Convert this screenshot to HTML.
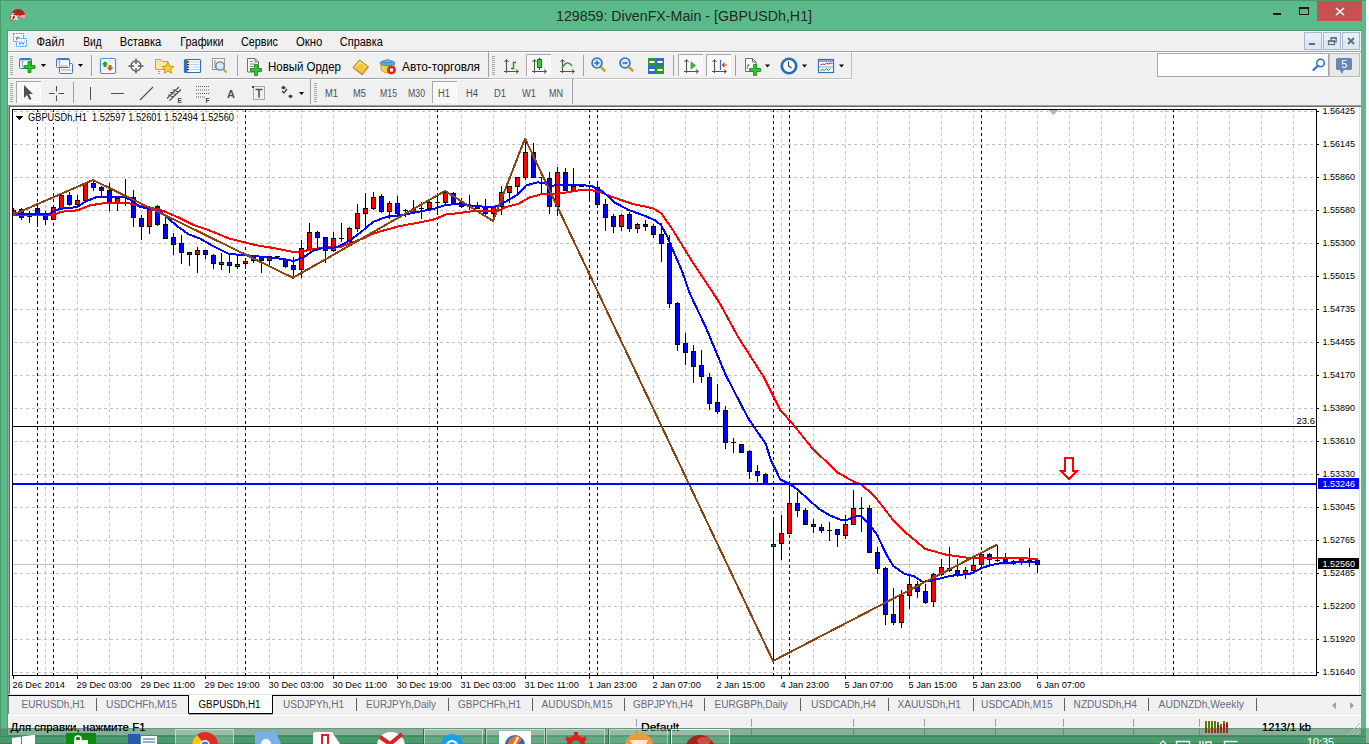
<!DOCTYPE html><html><head><meta charset="utf-8"><style>html,body{margin:0;padding:0;width:1369px;height:744px;overflow:hidden;background:#fff}svg{display:block}text{font-family:"Liberation Sans",sans-serif}</style></head><body>
<svg width="1369" height="744" viewBox="0 0 1369 744">
<rect x="0" y="0" width="1369" height="744" fill="#ffffff" />
<rect x="0" y="0" width="1366" height="744" fill="#5cba8a" />
<rect x="0" y="0" width="1366" height="1" fill="#4a9a70" />
<rect x="0" y="0" width="1" height="744" fill="#4a9a70" />
<path d="M10.5 20.5 C10 14 13 9 18 9 C22 9 25 12 25.8 16.5 C25.7 18.5 24.8 19.2 23 18.2 C20.5 16.8 17 17 15 18.5 C13.5 19.8 12 21 10.5 20.5Z" fill="#b3241a"/>
<path d="M17.5 17.2 C20.5 15.2 23.5 14.5 25.8 15 C26 18 25.2 19.4 23.2 18.5 C21.5 17.5 19.5 17 17.5 17.2Z" fill="#eda59c"/>
<text x="10.5" y="19.5" font-size="9" fill="#fff" text-anchor="start" font-style="italic" font-weight="bold">fx</text>
<text x="556" y="21" font-size="14" fill="#1f2a24" text-anchor="start" textLength="256" lengthAdjust="spacingAndGlyphs" >129859: DivenFX-Main - [GBPUSDh,H1]</text>
<rect x="1273" y="13" width="8" height="2" fill="#1a1a1a" />
<rect x="1299.5" y="7.5" width="9" height="7" fill="none" stroke="#1a1a1a" stroke-width="1"/>
<rect x="1299" y="7" width="10" height="2" fill="#1a1a1a" />
<rect x="1317" y="1" width="45" height="20" fill="#c75050" />
<path d="M1336 8L1344 15M1344 8L1336 15" stroke="#fff" stroke-width="1.6"/>
<rect x="7" y="30" width="1355" height="706" fill="#4f9e76" />
<rect x="8" y="31" width="1353" height="704" fill="#f0f0f0" />
<rect x="8" y="31" width="1353" height="1" fill="#fbf8f8" />
<rect x="8" y="31" width="1" height="697" fill="#fbf8f8" />
<g>
<rect x="13.5" y="33.5" width="10" height="8" fill="#fff" stroke="#3a8cf0" stroke-width="1" stroke-dasharray="1.5,0.8"/>
<rect x="16.5" y="38.5" width="10" height="8" fill="#fff" stroke="#3a8cf0" stroke-width="1" stroke-dasharray="1.5,0.8"/>
<path d="M15.5 37.5h3M17.5 36l1.5 1.5-1.5 1.5" stroke="#3a8cf0" fill="none" stroke-width="0.9"/>
<path d="M18.5 41.5l1.5 3 1.5-3 1.5 3 1.5-3" stroke="#3a8cf0" fill="none" stroke-width="0.9"/>
<text x="36.5" y="45.5" font-size="12" fill="#000" text-anchor="start" textLength="27.8" lengthAdjust="spacingAndGlyphs" >Файл</text>
<text x="83.3" y="45.5" font-size="12" fill="#000" text-anchor="start" textLength="18.4" lengthAdjust="spacingAndGlyphs" >Вид</text>
<text x="119.8" y="45.5" font-size="12" fill="#000" text-anchor="start" textLength="41.5" lengthAdjust="spacingAndGlyphs" >Вставка</text>
<text x="180.3" y="45.5" font-size="12" fill="#000" text-anchor="start" textLength="43.2" lengthAdjust="spacingAndGlyphs" >Графики</text>
<text x="241" y="45.5" font-size="12" fill="#000" text-anchor="start" textLength="37" lengthAdjust="spacingAndGlyphs" >Сервис</text>
<text x="296" y="45.5" font-size="12" fill="#000" text-anchor="start" textLength="26.3" lengthAdjust="spacingAndGlyphs" >Окно</text>
<text x="339.8" y="45.5" font-size="12" fill="#000" text-anchor="start" textLength="43" lengthAdjust="spacingAndGlyphs" >Справка</text>
</g>
<rect x="1304.5" y="32.5" width="17" height="17" fill="#dce8f5" stroke="#a9b8cb" stroke-width="1"/>
<rect x="1305" y="33" width="16" height="7" fill="#e6eff9" />
<rect x="1323.5" y="32.5" width="17" height="17" fill="#dce8f5" stroke="#a9b8cb" stroke-width="1"/>
<rect x="1324" y="33" width="16" height="7" fill="#e6eff9" />
<rect x="1342.5" y="32.5" width="17" height="17" fill="#dce8f5" stroke="#a9b8cb" stroke-width="1"/>
<rect x="1343" y="33" width="16" height="7" fill="#e6eff9" />
<rect x="1309" y="43" width="6" height="2" fill="#5f6b78" />
<rect x="1328.5" y="41" width="6" height="3.5" fill="none" stroke="#5f6b78" stroke-width="1.2"/><rect x="1328" y="40.4" width="7" height="1.4" fill="#5f6b78"/><path d="M1331 40.2V37.8H1336.2V41.8H1335" fill="none" stroke="#5f6b78" stroke-width="1.2"/><rect x="1330.5" y="37.2" width="6.2" height="1.4" fill="#5f6b78"/>
<path d="M1348 38L1354 44M1354 38L1348 44" stroke="#5f6b78" stroke-width="1.8"/>
<rect x="8" y="51" width="1353" height="1" fill="#a0a0a0" />
<rect x="8" y="52" width="1353" height="1" fill="#ffffff" />
<rect x="8" y="78" width="843" height="1" fill="#a0a0a0" />
<rect x="8" y="79" width="843" height="1" fill="#ffffff" />
<rect x="488" y="52" width="1" height="25" fill="#a0a0a0" />
<path d="M851.5 52V78.5H489" stroke="#c0c0c0" fill="none"/>
<rect x="310" y="79" width="1" height="25" fill="#a0a0a0" />
<rect x="572" y="79" width="1" height="25" fill="#a0a0a0" />
<rect x="10" y="56" width="3" height="1" fill="#a8a8a8" />
<rect x="10" y="58" width="3" height="1" fill="#a8a8a8" />
<rect x="10" y="60" width="3" height="1" fill="#a8a8a8" />
<rect x="10" y="62" width="3" height="1" fill="#a8a8a8" />
<rect x="10" y="64" width="3" height="1" fill="#a8a8a8" />
<rect x="10" y="66" width="3" height="1" fill="#a8a8a8" />
<rect x="10" y="68" width="3" height="1" fill="#a8a8a8" />
<rect x="10" y="70" width="3" height="1" fill="#a8a8a8" />
<rect x="10" y="72" width="3" height="1" fill="#a8a8a8" />
<rect x="10" y="74" width="3" height="1" fill="#a8a8a8" />
<rect x="10" y="83" width="3" height="1" fill="#a8a8a8" />
<rect x="10" y="85" width="3" height="1" fill="#a8a8a8" />
<rect x="10" y="87" width="3" height="1" fill="#a8a8a8" />
<rect x="10" y="89" width="3" height="1" fill="#a8a8a8" />
<rect x="10" y="91" width="3" height="1" fill="#a8a8a8" />
<rect x="10" y="93" width="3" height="1" fill="#a8a8a8" />
<rect x="10" y="95" width="3" height="1" fill="#a8a8a8" />
<rect x="10" y="97" width="3" height="1" fill="#a8a8a8" />
<rect x="10" y="99" width="3" height="1" fill="#a8a8a8" />
<rect x="10" y="101" width="3" height="1" fill="#a8a8a8" />
<rect x="492" y="56" width="3" height="1" fill="#a8a8a8" />
<rect x="492" y="58" width="3" height="1" fill="#a8a8a8" />
<rect x="492" y="60" width="3" height="1" fill="#a8a8a8" />
<rect x="492" y="62" width="3" height="1" fill="#a8a8a8" />
<rect x="492" y="64" width="3" height="1" fill="#a8a8a8" />
<rect x="492" y="66" width="3" height="1" fill="#a8a8a8" />
<rect x="492" y="68" width="3" height="1" fill="#a8a8a8" />
<rect x="492" y="70" width="3" height="1" fill="#a8a8a8" />
<rect x="492" y="72" width="3" height="1" fill="#a8a8a8" />
<rect x="492" y="74" width="3" height="1" fill="#a8a8a8" />
<rect x="314" y="83" width="3" height="1" fill="#a8a8a8" />
<rect x="314" y="85" width="3" height="1" fill="#a8a8a8" />
<rect x="314" y="87" width="3" height="1" fill="#a8a8a8" />
<rect x="314" y="89" width="3" height="1" fill="#a8a8a8" />
<rect x="314" y="91" width="3" height="1" fill="#a8a8a8" />
<rect x="314" y="93" width="3" height="1" fill="#a8a8a8" />
<rect x="314" y="95" width="3" height="1" fill="#a8a8a8" />
<rect x="314" y="97" width="3" height="1" fill="#a8a8a8" />
<rect x="314" y="99" width="3" height="1" fill="#a8a8a8" />
<rect x="314" y="101" width="3" height="1" fill="#a8a8a8" />
<rect x="91" y="55" width="1" height="21" fill="#a0a0a0" />
<rect x="237" y="55" width="1" height="21" fill="#a0a0a0" />
<rect x="583" y="55" width="1" height="21" fill="#a0a0a0" />
<rect x="673" y="55" width="1" height="21" fill="#a0a0a0" />
<rect x="735" y="55" width="1" height="21" fill="#a0a0a0" />
<rect x="73" y="82" width="1" height="21" fill="#a0a0a0" />
<rect x="1157.5" y="53.5" width="171" height="23" fill="#fff" stroke="#a8a8a8"/>
<circle cx="1320.5" cy="63" r="3.8" fill="#fff" stroke="#2e6ad0" stroke-width="1.5"/><path d="M1317.8 65.8L1313.5 70" stroke="#2e6ad0" stroke-width="2.2" stroke-linecap="round"/>
<rect x="1329.5" y="53.5" width="30" height="23" fill="#e8e8e8" stroke="#bcbcbc"/>
<path d="M1337.5 58H1350.5Q1352 58 1352 59.5V68.5Q1352 70 1350.5 70H1344Q1342.5 71.5 1342.5 74Q1340 72 1340 70H1337.5Q1336 70 1336 68.5V59.5Q1336 58 1337.5 58Z" fill="#6a86b6"/>
<text x="1341.3" y="68.2" font-size="11" fill="#fff" text-anchor="start" textLength="6" lengthAdjust="spacingAndGlyphs" >5</text>
<rect x="16" y="81" width="25" height="22" fill="#f8f8f8"/>
<path d="M16.5 103V81.5H41" stroke="#a8a8a8" fill="none"/><path d="M40.5 82V102.5H17" stroke="#ffffff" fill="none"/>
<rect x="432" y="81" width="25" height="22" fill="#f8f8f8"/>
<path d="M432.5 103V81.5H457" stroke="#a8a8a8" fill="none"/><path d="M456.5 82V102.5H433" stroke="#ffffff" fill="none"/>
<rect x="526" y="54" width="25" height="22" fill="#f8f8f8"/>
<path d="M526.5 76V54.5H551" stroke="#a8a8a8" fill="none"/><path d="M550.5 55V75.5H527" stroke="#ffffff" fill="none"/>
<rect x="678" y="54" width="25" height="22" fill="#f8f8f8"/>
<path d="M678.5 76V54.5H703" stroke="#a8a8a8" fill="none"/><path d="M702.5 55V75.5H679" stroke="#ffffff" fill="none"/>
<rect x="706" y="54" width="25" height="22" fill="#f8f8f8"/>
<path d="M706.5 76V54.5H731" stroke="#a8a8a8" fill="none"/><path d="M730.5 55V75.5H707" stroke="#ffffff" fill="none"/>
<text x="268" y="71" font-size="12" fill="#000" text-anchor="start" textLength="73" lengthAdjust="spacingAndGlyphs" >Новый Ордер</text>
<text x="402" y="71" font-size="12" fill="#000" text-anchor="start" textLength="78" lengthAdjust="spacingAndGlyphs" >Авто-торговля</text>
<text x="325" y="97" font-size="10" fill="#505050" text-anchor="start" textLength="13" lengthAdjust="spacingAndGlyphs" >M1</text>
<text x="353" y="97" font-size="10" fill="#505050" text-anchor="start" textLength="13" lengthAdjust="spacingAndGlyphs" >M5</text>
<text x="380" y="97" font-size="10" fill="#505050" text-anchor="start" textLength="17" lengthAdjust="spacingAndGlyphs" >M15</text>
<text x="408" y="97" font-size="10" fill="#505050" text-anchor="start" textLength="17" lengthAdjust="spacingAndGlyphs" >M30</text>
<text x="438" y="97" font-size="10" fill="#505050" text-anchor="start" textLength="12" lengthAdjust="spacingAndGlyphs" >H1</text>
<text x="466" y="97" font-size="10" fill="#505050" text-anchor="start" textLength="12" lengthAdjust="spacingAndGlyphs" >H4</text>
<text x="494" y="97" font-size="10" fill="#505050" text-anchor="start" textLength="12" lengthAdjust="spacingAndGlyphs" >D1</text>
<text x="522" y="97" font-size="10" fill="#505050" text-anchor="start" textLength="14" lengthAdjust="spacingAndGlyphs" >W1</text>
<text x="549" y="97" font-size="10" fill="#505050" text-anchor="start" textLength="14" lengthAdjust="spacingAndGlyphs" >MN</text>
<rect x="19.5" y="58.5" width="12" height="10" rx="1" fill="#f4f8fc" stroke="#3a7bc8"/><path d="M20 59.5h11" stroke="#3a7bc8" stroke-width="1.5"/><path d="M22.5 61v6M21.5 62l1-1 1 1" stroke="#8aa8c8" fill="none"/>
<path d="M28 61.5h3v4h4v3h-4v4h-3v-4h-4v-3h4z" fill="#22c426" stroke="#0e8a12" stroke-width="0.8"/>
<path d="M41 64h5l-2.5 3z" fill="#000"/>
<rect x="59.5" y="63.5" width="13" height="10" rx="1" fill="#f4f8fc" stroke="#3a7bc8"/><path d="M61 70h10" stroke="#8aa8c8"/>
<rect x="56.5" y="58.5" width="13" height="9" rx="1" fill="#f4f8fc" stroke="#3a7bc8"/><path d="M57 59.5h12" stroke="#3a7bc8" stroke-width="1.2"/><path d="M59.5 61v5h8M58.5 62l1-1 1 1" stroke="#8aa8c8" fill="none"/>
<path d="M78 64h5l-2.5 3z" fill="#000"/>
<rect x="100.5" y="58.5" width="15" height="15" rx="1.5" fill="#fff" stroke="#4a90d9" stroke-width="1.2"/><path d="M108 61h5M108 63h5M101.5 68h5M101.5 70h5" stroke="#dcdcdc"/>
<path d="M105 61l-3.5 3.5h2v2.5h3v-2.5h2z" fill="#20a020"/><path d="M110 71l3.5-3.5h-2v-2.5h-3v2.5h-2z" fill="#e05020"/>
<circle cx="136" cy="66" r="5" fill="none" stroke="#606060" stroke-width="1.3"/><path d="M136 58.5V64M136 68V73.5M128.5 66H134M138 66H143.5" stroke="#606060" stroke-width="1.4"/>
<path d="M155.5 59.5h5l1.5 2h6v8h-12.5z" fill="#fbe89a" stroke="#d0a030"/><path d="M159 71v4" stroke="#404040" stroke-dasharray="1,1"/>
<path d="M168 62.5l1.8 3.6 4 .5-2.9 2.7.7 4-3.6-2-3.6 2 .7-4-2.9-2.7 4-.5z" fill="#f5cf3a" stroke="#b8860b" stroke-width="0.8"/>
<rect x="184.5" y="59.5" width="16" height="13" rx="1" fill="#fff" stroke="#2f6fc0" stroke-width="1.2"/><rect x="185" y="60" width="2.5" height="12" fill="#2f6fc0"/><path d="M189 62h10M189 64.5h10M189 67h10M189 69.5h10" stroke="#a8c4ec" stroke-width="0.8"/>
<path d="M187 62h2M187 64.5h2M187 67h2M187 69.5h2" stroke="#202020" stroke-width="1"/><circle cx="188.3" cy="62" r="0.7" fill="#e02020"/><circle cx="188.3" cy="67" r="0.7" fill="#e02020"/>
<rect x="212.5" y="58.5" width="12" height="11" fill="#f8f6f0" stroke="#a09a80"/><path d="M215 60v8h7" stroke="#707070" fill="none" stroke-width="0.8"/><circle cx="220" cy="66" r="4.2" fill="#dbe8f5" fill-opacity="0.9" stroke="#5a86c0" stroke-width="1.2"/><path d="M223 69l3.5 3.5" stroke="#c8a020" stroke-width="2"/>
<path d="M247.5 58.5h7.5l3.5 3.5v10h-11z" fill="#fafafa" stroke="#707070"/><path d="M255 58.5v3.5h3.5" fill="none" stroke="#707070"/>
<path d="M249.5 61.5h3.5M249.5 64h6M249.5 66.5h4M249.5 69h3" stroke="#8a8a8a" stroke-width="1"/>
<path d="M254.5 64.5h3v4h4v3h-4v4h-3v-4h-4v-3h4z" fill="#2ec832" stroke="#0e8a12" stroke-width="0.8"/>
<path d="M353 67.5l6.5-7.5 9 7-6.5 7.5z" fill="#f0c838" stroke="#9a7010" stroke-width="0.9"/><path d="M355 69l7 5.5 5.5-6.5" stroke="#c89028" stroke-width="1.2" fill="none"/><path d="M356 66.5l4-4.5 6 4.5" stroke="#fff4b0" stroke-width="1" fill="none"/>
<path d="M380.5 64.5q7 3 14 0l-1 6q-6 5-12 0z" fill="#f3cf4a" stroke="#c09020" stroke-width="0.8"/>
<ellipse cx="387.5" cy="63" rx="7.5" ry="2.6" fill="#5aa8e0" stroke="#3a80c0" stroke-width="0.8"/><path d="M383 62.5q4.5-6 9 0z" fill="#6ab8ea" stroke="#3a80c0" stroke-width="0.8"/>
<circle cx="391.5" cy="70" r="4" fill="#e02818" stroke="#b01010" stroke-width="0.6"/><rect x="390" y="68.5" width="3" height="3" fill="#fff"/>
<path d="M506.5 60V73M504 71.5H518" stroke="#505050" stroke-width="1.1" fill="none"/>
<path d="M504.5 62L506.5 59.5L508.5 62M516 69.5L518.5 71.5L516 73.5" stroke="#505050" stroke-width="1" fill="none"/>
<path d="M513.5 61.5V69.5M511 68.5h2.5M513.5 62.5h2.5" stroke="#1a9a1a" stroke-width="1.4" fill="none"/>
<path d="M534.5 60V73M532 71.5H546" stroke="#505050" stroke-width="1.1" fill="none"/>
<path d="M532.5 62L534.5 59.5L536.5 62M544 69.5L546.5 71.5L544 73.5" stroke="#505050" stroke-width="1" fill="none"/>
<path d="M539.5 57.5V70" stroke="#107a10" stroke-width="1"/><rect x="537.5" y="59.5" width="4" height="8" fill="#30d030" stroke="#107a10" stroke-width="1"/>
<path d="M562.5 60V73M560 71.5H574" stroke="#505050" stroke-width="1.1" fill="none"/>
<path d="M560.5 62L562.5 59.5L564.5 62M572 69.5L574.5 71.5L572 73.5" stroke="#505050" stroke-width="1" fill="none"/>
<path d="M562 68q5-9 10-2" stroke="#2a9a2a" fill="none" stroke-width="1.3"/>
<circle cx="597" cy="63" r="5" fill="#d4e8fa" stroke="#2f6fc0" stroke-width="1.6"/><path d="M594.5 63h5M597 60.5v5" stroke="#2f6fc0" stroke-width="1.6"/><path d="M600.8 66.8l4.5 4.5" stroke="#c8a020" stroke-width="2.6"/>
<circle cx="625" cy="63" r="5" fill="#d4e8fa" stroke="#2f6fc0" stroke-width="1.6"/><path d="M622.5 63h5" stroke="#2f6fc0" stroke-width="1.6"/><path d="M628.8 66.8l4.5 4.5" stroke="#c8a020" stroke-width="2.6"/>
<rect x="648" y="58" width="8" height="8" fill="#2a9a2a"/><rect x="656" y="58" width="8" height="8" fill="#2f6fc0"/><rect x="648" y="66" width="8" height="8" fill="#2f6fc0"/><rect x="656" y="66" width="8" height="8" fill="#2a9a2a"/><path d="M649.5 62h5M657.5 62h5M649.5 70h5M657.5 70h5" stroke="#fff" stroke-width="2"/>
<path d="M686.5 60V73M684 71.5H698" stroke="#505050" stroke-width="1.1" fill="none"/>
<path d="M684.5 62L686.5 59.5L688.5 62M696 69.5L698.5 71.5L696 73.5" stroke="#505050" stroke-width="1" fill="none"/>
<path d="M691 62v7l4.5-3.5z" fill="#30c030" stroke="#1a8a1a" stroke-width="0.6"/>
<path d="M714.5 60V73M712 71.5H726" stroke="#505050" stroke-width="1.1" fill="none"/>
<path d="M712.5 62L714.5 59.5L716.5 62M724 69.5L726.5 71.5L724 73.5" stroke="#505050" stroke-width="1" fill="none"/>
<path d="M720.5 60V70" stroke="#2f6fc0" stroke-width="1.2"/><path d="M727 65h-4.5M724.5 63l-2 2 2 2" stroke="#d04010" fill="none" stroke-width="1.2"/>
<path d="M745.5 58.5h7l3.5 3.5v9.5h-10.5z" fill="#fafafa" stroke="#707070"/><path d="M752.5 58.5v3.5h3.5" fill="none" stroke="#707070"/>
<text x="746.5" y="69" font-size="8" fill="#505050" text-anchor="start" font-style="italic">f</text>
<path d="M753.5 64.5h3v4h4v3h-4v4h-3v-4h-4v-3h4z" fill="#2ec832" stroke="#0e8a12" stroke-width="0.8"/><path d="M765 64.5h5l-2.5 3z" fill="#000"/>
<circle cx="789" cy="66" r="7" fill="#fff" stroke="#1f6ad0" stroke-width="2.2"/><circle cx="789" cy="66" r="8.2" fill="none" stroke="#0e4aa0" stroke-width="0.6"/><path d="M788.5 61.5v4.5l3 2" stroke="#303030" fill="none" stroke-width="1.1"/><path d="M802 64.5h5l-2.5 3z" fill="#000"/>
<rect x="818.5" y="59.5" width="15" height="13" fill="#fff" stroke="#2d6fc8" stroke-width="1.2"/><rect x="819" y="60" width="14" height="2" fill="#7aa8e8"/><path d="M819 67h14" stroke="#7aa8e8"/>
<path d="M820.5 65l2-1 2 .5 2-1.2 2 .7 2-1 2 .5" stroke="#b02010" fill="none" stroke-width="1"/><path d="M820.5 70.5l2-1 2 .8 2-1.5 2 1.5 2-1.8" stroke="#1a9a1a" fill="none" stroke-width="1"/>
<path d="M839 64.5h5l-2.5 3z" fill="#000"/>
<path d="M24 85v13l3-3 2.5 5 2-1-2.5-5h4z" fill="#505050"/>
<path d="M56.5 86V91.5M56.5 95.5V101M49 93.5H54.5M58.5 93.5H64" stroke="#505050" fill="none" stroke-width="1.1"/>
<rect x="90" y="87" width="1" height="13" fill="#505050" />
<rect x="111" y="93" width="13" height="1" fill="#505050" />
<path d="M140 100L153 87" stroke="#505050" stroke-width="1.1"/>
<path d="M167 98.5L179 87M169.5 100.5L181 89.5M168 95h3M170 92.5h3M172.5 90h3M171 96.5h3M173.5 94h3M176 91.5h3" stroke="#505050" stroke-width="1.1" fill="none"/>
<text x="177.5" y="103" font-size="6.5" fill="#404040" text-anchor="start" font-weight="bold">E</text>
<path d="M196 86.5h13M196 90h13M196 93.5h13M196 97h9" stroke="#606060" stroke-dasharray="1,1"/>
<text x="205.5" y="103" font-size="6.5" fill="#404040" text-anchor="start" font-weight="bold">F</text>
<text x="227" y="98" font-size="11" fill="#505050" text-anchor="start" textLength="8" lengthAdjust="spacingAndGlyphs" font-weight="bold">A</text>
<rect x="253.5" y="86.5" width="11" height="13" fill="none" stroke="#606060" stroke-dasharray="1,1"/>
<rect x="252" y="86" width="2" height="2" fill="#404040" />
<path d="M255.5 89.5h7M259 89.5v8" stroke="#505050" stroke-width="1.6"/>
<path d="M281 88l2.5-2.5 2.5 2.5-2.5 1.5z" fill="#404040"/><path d="M288 96l2.5-1.5 2.5 1.5-2.5 2.5z" fill="#404040"/><path d="M282 91l2 2 3-4" stroke="#404040" stroke-width="1.3" fill="none"/><path d="M299 92h5l-2.5 3z" fill="#000"/>
<rect x="9" y="694" width="1352" height="1" fill="#e6e6e6" />
<rect x="8" y="695" width="1353" height="1" fill="#000" />
<rect x="8" y="696" width="1" height="18" fill="#808080" />
<rect x="9" y="715" width="1352" height="1" fill="#ffffff" />
<text x="21.5" y="708" font-size="10" fill="#6a6a80" text-anchor="start" textLength="63.5" lengthAdjust="spacingAndGlyphs" >EURUSDh,H1</text>
<text x="106" y="708" font-size="10" fill="#6a6a80" text-anchor="start" textLength="71" lengthAdjust="spacingAndGlyphs" >USDCHFh,M15</text>
<text x="283" y="708" font-size="10" fill="#6a6a80" text-anchor="start" textLength="61" lengthAdjust="spacingAndGlyphs" >USDJPYh,H1</text>
<text x="366" y="708" font-size="10" fill="#6a6a80" text-anchor="start" textLength="70" lengthAdjust="spacingAndGlyphs" >EURJPYh,Daily</text>
<text x="458" y="708" font-size="10" fill="#6a6a80" text-anchor="start" textLength="63" lengthAdjust="spacingAndGlyphs" >GBPCHFh,H1</text>
<text x="541.6" y="708" font-size="10" fill="#6a6a80" text-anchor="start" textLength="71" lengthAdjust="spacingAndGlyphs" >AUDUSDh,M15</text>
<text x="633" y="708" font-size="10" fill="#6a6a80" text-anchor="start" textLength="60" lengthAdjust="spacingAndGlyphs" >GBPJPYh,H4</text>
<text x="714.6" y="708" font-size="10" fill="#6a6a80" text-anchor="start" textLength="73" lengthAdjust="spacingAndGlyphs" >EURGBPh,Daily</text>
<text x="811" y="708" font-size="10" fill="#6a6a80" text-anchor="start" textLength="65" lengthAdjust="spacingAndGlyphs" >USDCADh,H4</text>
<text x="897.6" y="708" font-size="10" fill="#6a6a80" text-anchor="start" textLength="63.4" lengthAdjust="spacingAndGlyphs" >XAUUSDh,H1</text>
<text x="981" y="708" font-size="10" fill="#6a6a80" text-anchor="start" textLength="71.6" lengthAdjust="spacingAndGlyphs" >USDCADh,M15</text>
<text x="1073.6" y="708" font-size="10" fill="#6a6a80" text-anchor="start" textLength="63.4" lengthAdjust="spacingAndGlyphs" >NZDUSDh,H4</text>
<text x="1158.6" y="708" font-size="10" fill="#6a6a80" text-anchor="start" textLength="85.4" lengthAdjust="spacingAndGlyphs" >AUDNZDh,Weekly</text>
<rect x="96" y="698" width="1" height="13" fill="#606060" />
<rect x="356" y="698" width="1" height="13" fill="#606060" />
<rect x="448" y="698" width="1" height="13" fill="#606060" />
<rect x="532" y="698" width="1" height="13" fill="#606060" />
<rect x="624" y="698" width="1" height="13" fill="#606060" />
<rect x="704" y="698" width="1" height="13" fill="#606060" />
<rect x="800" y="698" width="1" height="13" fill="#606060" />
<rect x="888" y="698" width="1" height="13" fill="#606060" />
<rect x="973" y="698" width="1" height="13" fill="#606060" />
<rect x="1064" y="698" width="1" height="13" fill="#606060" />
<rect x="1148" y="698" width="1" height="13" fill="#606060" />
<rect x="1256" y="698" width="1" height="13" fill="#606060" />
<path d="M188.5 695V713.5H272.5V695" fill="#fff" stroke="#000" stroke-width="1"/>
<rect x="189" y="695" width="83" height="1" fill="#fff" />
<text x="198.5" y="708" font-size="10" fill="#000" text-anchor="start" textLength="62" lengthAdjust="spacingAndGlyphs" >GBPUSDh,H1</text>
<rect x="189" y="714" width="84" height="1" fill="#a8a8a8" />
<path d="M1336 702L1332 705.5L1336 709Z" fill="#a0a0a0"/><path d="M1350 702L1354 705.5L1350 709Z" fill="#a0a0a0"/>
<text x="10.5" y="731" font-size="11" fill="#000" text-anchor="start" textLength="135" lengthAdjust="spacingAndGlyphs" >Для справки, нажмите F1</text>
<text x="641" y="731" font-size="11" fill="#000" text-anchor="start" textLength="38" lengthAdjust="spacingAndGlyphs" >Default</text>
<rect x="636" y="719" width="1" height="16" fill="#a0a0a0" />
<rect x="751" y="719" width="1" height="16" fill="#a0a0a0" />
<rect x="853" y="719" width="1" height="16" fill="#a0a0a0" />
<rect x="924" y="719" width="1" height="16" fill="#a0a0a0" />
<rect x="995" y="719" width="1" height="16" fill="#a0a0a0" />
<rect x="1063" y="719" width="1" height="16" fill="#a0a0a0" />
<rect x="1133" y="719" width="1" height="16" fill="#a0a0a0" />
<rect x="1199" y="719" width="1" height="16" fill="#a0a0a0" />
<text x="1262" y="731" font-size="11" fill="#000" text-anchor="start" textLength="49" lengthAdjust="spacingAndGlyphs" >1213/1 kb</text>
<g shape-rendering="crispEdges">
<rect x="9" y="105" width="1352" height="590" fill="#ffffff" />
<rect x="8" y="105" width="1353" height="1" fill="#a0a0a0" />
<rect x="8" y="105" width="1" height="590" fill="#a0a0a0" />
<rect x="9" y="106" width="1352" height="1" fill="#696969" />
<rect x="9" y="106" width="1" height="589" fill="#696969" />
<path d="M13 111.5H1316 M13 144.5H1316 M13 177.5H1316 M13 210.5H1316 M13 243.5H1316 M13 276.5H1316 M13 309.5H1316 M13 342.5H1316 M13 375.5H1316 M13 408.5H1316 M13 441.5H1316 M13 474.5H1316 M13 507.5H1316 M13 540.5H1316 M13 573.5H1316 M13 606.5H1316 M13 639.5H1316 M13 672.5H1316" stroke="#c0c0c0" stroke-width="1" stroke-dasharray="3,3" stroke-dashoffset="5" fill="none"/>
<path d="M45.5 110V675 M77.5 110V675 M109.5 110V675 M141.5 110V675 M173.5 110V675 M205.5 110V675 M237.5 110V675 M269.5 110V675 M301.5 110V675 M333.5 110V675 M365.5 110V675 M397.5 110V675 M429.5 110V675 M461.5 110V675 M493.5 110V675 M525.5 110V675 M557.5 110V675 M589.5 110V675 M621.5 110V675 M653.5 110V675 M685.5 110V675 M717.5 110V675 M749.5 110V675 M781.5 110V675 M813.5 110V675 M845.5 110V675 M877.5 110V675 M909.5 110V675 M941.5 110V675 M973.5 110V675 M1005.5 110V675 M1037.5 110V675 M1069.5 110V675 M1101.5 110V675 M1133.5 110V675 M1165.5 110V675 M1197.5 110V675 M1229.5 110V675 M1261.5 110V675 M1293.5 110V675" stroke="#c0c0c0" stroke-width="1" stroke-dasharray="3,3" stroke-dashoffset="1" fill="none"/>
<path d="M37.5 110V675 M53.5 110V675 M245.5 110V675 M437.5 110V675 M589.5 110V675 M597.5 110V675 M773.5 110V675 M789.5 110V675 M981.5 110V675 M1173.5 110V675" stroke="#000" stroke-width="1" stroke-dasharray="3,3" stroke-dashoffset="1" fill="none"/>
<rect x="13" y="564" width="1303" height="1" fill="#c0c0c0" />
<rect x="13" y="426" width="1303" height="1" fill="#000" />
<defs><clipPath id="plot"><rect x="13" y="110" width="1303" height="565"/></clipPath></defs>
<g clip-path="url(#plot)">
<path d="M13.5 208V215 M21.5 208V220 M29.5 211V223 M37.5 208V227 M45.5 211V225 M53.5 206V220 M61.5 195V209 M69.5 192V206 M77.5 195V205 M85.5 182V201 M93.5 181V191 M101.5 186V197 M109.5 183V211 M117.5 198V211 M125.5 179V206 M133.5 190V227 M141.5 215V240 M149.5 206V234 M157.5 205V226 M165.5 214V239 M173.5 233V255 M181.5 235V264 M189.5 252V266 M197.5 247V273 M205.5 250V259 M213.5 254V269 M221.5 253V270 M229.5 255V273 M237.5 256V269 M245.5 258V269 M253.5 256V263 M261.5 257V273 M269.5 256V266 M277.5 256V259 M285.5 258V268 M293.5 257V278 M301.5 240V278 M309.5 223V250 M317.5 231V248 M325.5 237V263 M333.5 232V252 M341.5 223V242 M349.5 227V242 M357.5 204V232 M365.5 193V228 M373.5 192V210 M381.5 194V213 M389.5 201V219 M397.5 196V215 M405.5 209V217 M413.5 200V213 M421.5 202V219 M429.5 201V210 M437.5 194V215 M445.5 190V204 M453.5 192V205 M461.5 198V208 M469.5 195V210 M477.5 202V209 M485.5 199V215 M493.5 206V219 M501.5 186V215 M509.5 186V203 M517.5 177V194 M525.5 139V180 M533.5 143V178 M541.5 177V194 M549.5 172V214 M557.5 167V216 M565.5 168V191 M573.5 168V191 M581.5 184V187 M589.5 185V202 M597.5 181V208 M605.5 199V231 M613.5 214V233 M621.5 214V231 M629.5 212V232 M637.5 223V233 M645.5 220V231 M653.5 224V238 M661.5 223V262 M669.5 235V308 M677.5 302V351 M685.5 333V365 M693.5 345V383 M701.5 350V383 M709.5 373V410 M717.5 384V414 M725.5 406V449 M733.5 438V453 M741.5 444V453 M749.5 450V479 M757.5 465V482 M765.5 473V484 M773.5 517V662 M781.5 515V560 M789.5 484V534 M797.5 492V517 M805.5 508V525 M813.5 519V533 M821.5 524V533 M829.5 522V541 M837.5 529V547 M845.5 515V539 M853.5 490V525 M861.5 497V532 M869.5 505V553 M877.5 547V574 M885.5 567V625 M893.5 588V625 M901.5 590V628 M909.5 576V609 M917.5 581V598 M925.5 584V604 M933.5 573V607 M941.5 559V576 M949.5 547V572 M957.5 559V577 M965.5 567V579 M973.5 559V571 M981.5 554V568 M989.5 553V565 M997.5 545V562 M1005.5 553V562 M1013.5 560V565 M1021.5 559V565 M1029.5 548V567 M1037.5 559V573" stroke="#000" stroke-width="1" fill="none"/>
<g fill="#000"><rect x="11" y="210" width="5" height="5"/><rect x="19" y="209" width="5" height="9"/><rect x="27" y="216" width="5" height="1"/><rect x="35" y="208" width="5" height="8"/><rect x="43" y="214" width="5" height="6"/><rect x="51" y="207" width="5" height="13"/><rect x="59" y="195" width="5" height="14"/><rect x="67" y="195" width="5" height="10"/><rect x="75" y="200" width="5" height="5"/><rect x="83" y="183" width="5" height="18"/><rect x="91" y="183" width="5" height="5"/><rect x="99" y="187" width="5" height="4"/><rect x="107" y="190" width="5" height="13"/><rect x="115" y="198" width="5" height="5"/><rect x="123" y="197" width="5" height="1"/><rect x="131" y="197" width="5" height="21"/><rect x="139" y="218" width="5" height="9"/><rect x="147" y="208" width="5" height="19"/><rect x="155" y="206" width="5" height="19"/><rect x="163" y="224" width="5" height="15"/><rect x="171" y="237" width="5" height="8"/><rect x="179" y="243" width="5" height="10"/><rect x="187" y="252" width="5" height="3"/><rect x="195" y="250" width="5" height="5"/><rect x="203" y="250" width="5" height="5"/><rect x="211" y="255" width="5" height="9"/><rect x="219" y="262" width="5" height="3"/><rect x="227" y="262" width="5" height="4"/><rect x="235" y="264" width="5" height="3"/><rect x="243" y="261" width="5" height="3"/><rect x="251" y="257" width="5" height="4"/><rect x="259" y="257" width="5" height="4"/><rect x="267" y="256" width="5" height="5"/><rect x="275" y="256" width="5" height="1"/><rect x="283" y="259" width="5" height="8"/><rect x="291" y="265" width="5" height="5"/><rect x="299" y="248" width="5" height="22"/><rect x="307" y="232" width="5" height="18"/><rect x="315" y="232" width="5" height="6"/><rect x="323" y="237" width="5" height="14"/><rect x="331" y="238" width="5" height="13"/><rect x="339" y="238" width="5" height="1"/><rect x="347" y="228" width="5" height="14"/><rect x="355" y="213" width="5" height="16"/><rect x="363" y="208" width="5" height="6"/><rect x="371" y="197" width="5" height="12"/><rect x="379" y="196" width="5" height="16"/><rect x="387" y="203" width="5" height="9"/><rect x="395" y="203" width="5" height="11"/><rect x="403" y="210" width="5" height="1"/><rect x="411" y="209" width="5" height="4"/><rect x="419" y="208" width="5" height="1"/><rect x="427" y="202" width="5" height="7"/><rect x="435" y="202" width="5" height="1"/><rect x="443" y="192" width="5" height="11"/><rect x="451" y="193" width="5" height="11"/><rect x="459" y="202" width="5" height="5"/><rect x="467" y="206" width="5" height="1"/><rect x="475" y="206" width="5" height="3"/><rect x="483" y="206" width="5" height="8"/><rect x="491" y="206" width="5" height="8"/><rect x="499" y="192" width="5" height="15"/><rect x="507" y="186" width="5" height="7"/><rect x="515" y="177" width="5" height="10"/><rect x="523" y="152" width="5" height="26"/><rect x="531" y="152" width="5" height="26"/><rect x="539" y="177" width="5" height="1"/><rect x="547" y="178" width="5" height="29"/><rect x="555" y="172" width="5" height="35"/><rect x="563" y="172" width="5" height="19"/><rect x="571" y="186" width="5" height="5"/><rect x="579" y="186" width="5" height="1"/><rect x="587" y="186" width="5" height="1"/><rect x="595" y="187" width="5" height="18"/><rect x="603" y="204" width="5" height="14"/><rect x="611" y="216" width="5" height="11"/><rect x="619" y="215" width="5" height="12"/><rect x="627" y="214" width="5" height="15"/><rect x="635" y="224" width="5" height="5"/><rect x="643" y="224" width="5" height="3"/><rect x="651" y="226" width="5" height="9"/><rect x="659" y="234" width="5" height="10"/><rect x="667" y="243" width="5" height="61"/><rect x="675" y="303" width="5" height="42"/><rect x="683" y="343" width="5" height="10"/><rect x="691" y="351" width="5" height="16"/><rect x="699" y="365" width="5" height="12"/><rect x="707" y="377" width="5" height="27"/><rect x="715" y="402" width="5" height="10"/><rect x="723" y="410" width="5" height="33"/><rect x="731" y="442" width="5" height="1"/><rect x="739" y="444" width="5" height="9"/><rect x="747" y="451" width="5" height="21"/><rect x="755" y="471" width="5" height="5"/><rect x="763" y="474" width="5" height="10"/><rect x="771" y="544" width="5" height="3"/><rect x="779" y="533" width="5" height="11"/><rect x="787" y="503" width="5" height="31"/><rect x="795" y="503" width="5" height="8"/><rect x="803" y="510" width="5" height="15"/><rect x="811" y="524" width="5" height="3"/><rect x="819" y="527" width="5" height="4"/><rect x="827" y="530" width="5" height="1"/><rect x="835" y="529" width="5" height="6"/><rect x="843" y="524" width="5" height="12"/><rect x="851" y="508" width="5" height="17"/><rect x="859" y="508" width="5" height="1"/><rect x="867" y="508" width="5" height="45"/><rect x="875" y="552" width="5" height="17"/><rect x="883" y="568" width="5" height="47"/><rect x="891" y="614" width="5" height="9"/><rect x="899" y="595" width="5" height="28"/><rect x="907" y="584" width="5" height="12"/><rect x="915" y="584" width="5" height="8"/><rect x="923" y="591" width="5" height="12"/><rect x="931" y="574" width="5" height="28"/><rect x="939" y="567" width="5" height="8"/><rect x="947" y="568" width="5" height="3"/><rect x="955" y="570" width="5" height="6"/><rect x="963" y="570" width="5" height="5"/><rect x="971" y="565" width="5" height="6"/><rect x="979" y="554" width="5" height="11"/><rect x="987" y="554" width="5" height="6"/><rect x="995" y="560" width="5" height="1"/><rect x="1003" y="559" width="5" height="3"/><rect x="1011" y="561" width="5" height="3"/><rect x="1019" y="559" width="5" height="3"/><rect x="1027" y="560" width="5" height="1"/><rect x="1035" y="560" width="5" height="5"/></g>
<g fill="#ff0000"><rect x="12" y="211" width="3" height="3"/><rect x="52" y="208" width="3" height="11"/><rect x="60" y="196" width="3" height="12"/><rect x="76" y="201" width="3" height="3"/><rect x="84" y="184" width="3" height="16"/><rect x="116" y="199" width="3" height="3"/><rect x="148" y="209" width="3" height="17"/><rect x="196" y="251" width="3" height="3"/><rect x="220" y="263" width="3" height="1"/><rect x="236" y="265" width="3" height="1"/><rect x="244" y="262" width="3" height="1"/><rect x="252" y="258" width="3" height="2"/><rect x="268" y="257" width="3" height="3"/><rect x="300" y="249" width="3" height="20"/><rect x="308" y="233" width="3" height="16"/><rect x="332" y="239" width="3" height="11"/><rect x="348" y="229" width="3" height="12"/><rect x="356" y="214" width="3" height="14"/><rect x="364" y="209" width="3" height="4"/><rect x="372" y="198" width="3" height="10"/><rect x="388" y="204" width="3" height="7"/><rect x="412" y="210" width="3" height="2"/><rect x="428" y="203" width="3" height="5"/><rect x="444" y="193" width="3" height="9"/><rect x="492" y="207" width="3" height="6"/><rect x="500" y="193" width="3" height="13"/><rect x="508" y="187" width="3" height="5"/><rect x="516" y="178" width="3" height="8"/><rect x="524" y="153" width="3" height="24"/><rect x="556" y="173" width="3" height="33"/><rect x="572" y="187" width="3" height="3"/><rect x="620" y="216" width="3" height="10"/><rect x="636" y="225" width="3" height="3"/><rect x="772" y="545" width="3" height="1"/><rect x="780" y="534" width="3" height="9"/><rect x="788" y="504" width="3" height="29"/><rect x="844" y="525" width="3" height="10"/><rect x="852" y="509" width="3" height="15"/><rect x="900" y="596" width="3" height="26"/><rect x="908" y="585" width="3" height="10"/><rect x="932" y="575" width="3" height="26"/><rect x="940" y="568" width="3" height="6"/><rect x="948" y="569" width="3" height="1"/><rect x="964" y="571" width="3" height="3"/><rect x="972" y="566" width="3" height="4"/><rect x="980" y="555" width="3" height="9"/><rect x="1020" y="560" width="3" height="1"/></g>
<g fill="#0000ff"><rect x="20" y="210" width="3" height="7"/><rect x="36" y="209" width="3" height="6"/><rect x="44" y="215" width="3" height="4"/><rect x="68" y="196" width="3" height="8"/><rect x="92" y="184" width="3" height="3"/><rect x="100" y="188" width="3" height="2"/><rect x="108" y="191" width="3" height="11"/><rect x="132" y="198" width="3" height="19"/><rect x="140" y="219" width="3" height="7"/><rect x="156" y="207" width="3" height="17"/><rect x="164" y="225" width="3" height="13"/><rect x="172" y="238" width="3" height="6"/><rect x="180" y="244" width="3" height="8"/><rect x="188" y="253" width="3" height="1"/><rect x="204" y="251" width="3" height="3"/><rect x="212" y="256" width="3" height="7"/><rect x="228" y="263" width="3" height="2"/><rect x="260" y="258" width="3" height="2"/><rect x="284" y="260" width="3" height="6"/><rect x="292" y="266" width="3" height="3"/><rect x="316" y="233" width="3" height="4"/><rect x="324" y="238" width="3" height="12"/><rect x="380" y="197" width="3" height="14"/><rect x="396" y="204" width="3" height="9"/><rect x="452" y="194" width="3" height="9"/><rect x="460" y="203" width="3" height="3"/><rect x="476" y="207" width="3" height="1"/><rect x="484" y="207" width="3" height="6"/><rect x="532" y="153" width="3" height="24"/><rect x="548" y="179" width="3" height="27"/><rect x="564" y="173" width="3" height="17"/><rect x="596" y="188" width="3" height="16"/><rect x="604" y="205" width="3" height="12"/><rect x="612" y="217" width="3" height="9"/><rect x="628" y="215" width="3" height="13"/><rect x="644" y="225" width="3" height="1"/><rect x="652" y="227" width="3" height="7"/><rect x="660" y="235" width="3" height="8"/><rect x="668" y="244" width="3" height="59"/><rect x="676" y="304" width="3" height="40"/><rect x="684" y="344" width="3" height="8"/><rect x="692" y="352" width="3" height="14"/><rect x="700" y="366" width="3" height="10"/><rect x="708" y="378" width="3" height="25"/><rect x="716" y="403" width="3" height="8"/><rect x="724" y="411" width="3" height="31"/><rect x="740" y="445" width="3" height="7"/><rect x="748" y="452" width="3" height="19"/><rect x="756" y="472" width="3" height="3"/><rect x="764" y="475" width="3" height="8"/><rect x="796" y="504" width="3" height="6"/><rect x="804" y="511" width="3" height="13"/><rect x="812" y="525" width="3" height="1"/><rect x="820" y="528" width="3" height="2"/><rect x="836" y="530" width="3" height="4"/><rect x="868" y="509" width="3" height="43"/><rect x="876" y="553" width="3" height="15"/><rect x="884" y="569" width="3" height="45"/><rect x="892" y="615" width="3" height="7"/><rect x="916" y="585" width="3" height="6"/><rect x="924" y="592" width="3" height="10"/><rect x="956" y="571" width="3" height="4"/><rect x="988" y="555" width="3" height="4"/><rect x="1004" y="560" width="3" height="1"/><rect x="1012" y="562" width="3" height="1"/><rect x="1036" y="561" width="3" height="3"/></g>
<polyline points="13.0,215.3 50.0,215.2 54.2,214.3 57.5,213.4 61.2,211.7 69.0,211.2 77.5,210.3 89.6,205.5 101.7,203.5 109.4,203.0 128.0,203.0 135.7,205.3 142.3,206.2 161.0,210.0 177.0,216.8 193.5,225.0 209.6,230.5 229.0,238.5 242.0,241.8 259.0,245.8 270.0,247.4 291.0,251.5 302.0,251.5 313.5,249.0 329.6,247.4 339.0,247.4 352.0,242.6 365.0,237.7 372.0,234.0 385.0,230.0 401.0,225.8 417.0,223.0 433.5,219.5 446.0,214.5 459.0,213.0 472.0,211.3 485.0,211.0 499.0,210.5 505.0,207.3 518.0,204.0 529.3,197.6 540.6,194.4 553.5,194.4 566.4,192.4 579.3,190.3 592.0,190.3 602.0,192.7 611.6,196.8 633.0,204.0 652.6,208.2 661.0,213.0 672.0,228.7 690.0,258.0 702.9,277.7 719.0,302.0 738.4,337.4 764.2,377.7 780.3,410.0 793.2,424.5 812.6,448.7 838.4,473.0 854.5,482.0 861.0,484.5 870.0,492.0 877.3,499.7 893.3,520.3 904.7,531.7 925.3,548.9 945.9,554.6 966.5,557.6 980.5,557.6 1021.4,558.2 1037.5,559.0" stroke="#ff0000" stroke-width="2" fill="none" stroke-linejoin="round"/>
<polyline points="13.0,214.2 45.0,214.3 49.0,213.8 51.4,212.9 56.0,210.5 60.8,208.6 69.0,208.2 77.5,206.7 85.6,201.5 97.7,196.6 109.0,196.8 124.5,197.3 131.0,200.0 139.5,206.5 161.0,212.0 177.0,226.0 189.0,234.5 200.0,238.5 213.0,246.0 229.0,254.0 249.0,255.5 281.0,258.7 294.0,261.0 304.0,257.0 313.5,250.6 323.0,248.0 336.0,247.4 349.0,241.0 362.0,231.3 373.0,222.0 382.0,218.5 390.0,216.0 401.0,215.3 417.0,212.0 433.5,209.0 446.0,204.8 459.0,204.0 472.0,205.6 485.0,206.8 495.0,206.5 499.0,205.5 508.4,200.0 518.0,194.4 526.0,185.5 537.4,182.3 543.8,183.0 550.3,186.3 556.7,185.0 569.6,184.7 585.8,185.5 592.0,186.3 602.0,191.0 609.0,197.3 613.8,202.0 628.4,209.9 645.3,216.0 655.0,220.3 661.0,225.0 667.0,236.0 672.0,248.0 681.6,270.0 690.0,293.9 706.0,327.7 725.5,374.5 748.0,418.0 765.8,444.0 770.8,460.0 780.3,479.4 790.0,484.2 797.6,489.7 808.4,499.4 819.1,509.0 829.9,515.5 840.6,519.8 846.0,520.3 854.6,517.0 860.0,515.5 868.0,522.6 877.3,535.2 886.4,554.6 893.3,566.0 904.7,574.0 913.9,576.3 923.0,582.0 934.5,579.8 945.9,577.0 955.0,575.2 969.0,574.0 973.0,572.7 981.6,568.0 991.0,565.2 998.8,563.5 1005.0,563.0 1012.8,562.5 1021.4,562.0 1037.5,561.4" stroke="#0000ff" stroke-width="2" fill="none" stroke-linejoin="round"/>
<polyline points="13.0,214.8 93.0,180.0 293.0,277.8 445.0,191.0 493.0,221.0 525.0,138.5 773.0,661.0 997.0,544.7" stroke="#8b4513" stroke-width="2" fill="none" stroke-linejoin="round"/>
</g>
<rect x="13" y="483" width="1303" height="2" fill="#0000ff" />
<polygon points="1065,458 1073,458 1073,471 1077,471 1069,479 1061,471 1065,471" fill="#fff" stroke="#ff0000" stroke-width="2"/>
<polygon points="1049,110 1058,110 1053.5,115" fill="#b4b4b4"/>
<rect x="1359" y="107" width="1" height="588" fill="#e0e0e0" />
<rect x="9" y="694" width="1352" height="1" fill="#e2e2e2" />
<rect x="12.5" y="109.5" width="1304" height="566" fill="none" stroke="#000" stroke-width="1"/>
<text x="1322.5" y="114" font-size="9.5" fill="#000" text-anchor="start" textLength="32.5" lengthAdjust="spacingAndGlyphs" >1.56425</text>
<text x="1322.5" y="147" font-size="9.5" fill="#000" text-anchor="start" textLength="32.5" lengthAdjust="spacingAndGlyphs" >1.56145</text>
<text x="1322.5" y="180" font-size="9.5" fill="#000" text-anchor="start" textLength="32.5" lengthAdjust="spacingAndGlyphs" >1.55860</text>
<text x="1322.5" y="213" font-size="9.5" fill="#000" text-anchor="start" textLength="32.5" lengthAdjust="spacingAndGlyphs" >1.55580</text>
<text x="1322.5" y="246" font-size="9.5" fill="#000" text-anchor="start" textLength="32.5" lengthAdjust="spacingAndGlyphs" >1.55300</text>
<text x="1322.5" y="279" font-size="9.5" fill="#000" text-anchor="start" textLength="32.5" lengthAdjust="spacingAndGlyphs" >1.55015</text>
<text x="1322.5" y="312" font-size="9.5" fill="#000" text-anchor="start" textLength="32.5" lengthAdjust="spacingAndGlyphs" >1.54735</text>
<text x="1322.5" y="345" font-size="9.5" fill="#000" text-anchor="start" textLength="32.5" lengthAdjust="spacingAndGlyphs" >1.54455</text>
<text x="1322.5" y="378" font-size="9.5" fill="#000" text-anchor="start" textLength="32.5" lengthAdjust="spacingAndGlyphs" >1.54170</text>
<text x="1322.5" y="411" font-size="9.5" fill="#000" text-anchor="start" textLength="32.5" lengthAdjust="spacingAndGlyphs" >1.53890</text>
<text x="1322.5" y="444" font-size="9.5" fill="#000" text-anchor="start" textLength="32.5" lengthAdjust="spacingAndGlyphs" >1.53610</text>
<text x="1322.5" y="477" font-size="9.5" fill="#000" text-anchor="start" textLength="32.5" lengthAdjust="spacingAndGlyphs" >1.53330</text>
<text x="1322.5" y="510" font-size="9.5" fill="#000" text-anchor="start" textLength="32.5" lengthAdjust="spacingAndGlyphs" >1.53045</text>
<text x="1322.5" y="543" font-size="9.5" fill="#000" text-anchor="start" textLength="32.5" lengthAdjust="spacingAndGlyphs" >1.52765</text>
<text x="1322.5" y="576" font-size="9.5" fill="#000" text-anchor="start" textLength="32.5" lengthAdjust="spacingAndGlyphs" >1.52485</text>
<text x="1322.5" y="609" font-size="9.5" fill="#000" text-anchor="start" textLength="32.5" lengthAdjust="spacingAndGlyphs" >1.52200</text>
<text x="1322.5" y="642" font-size="9.5" fill="#000" text-anchor="start" textLength="32.5" lengthAdjust="spacingAndGlyphs" >1.51920</text>
<text x="1322.5" y="675" font-size="9.5" fill="#000" text-anchor="start" textLength="32.5" lengthAdjust="spacingAndGlyphs" >1.51640</text>
<path d="M1317 111.5H1319 M1317 144.5H1319 M1317 177.5H1319 M1317 210.5H1319 M1317 243.5H1319 M1317 276.5H1319 M1317 309.5H1319 M1317 342.5H1319 M1317 375.5H1319 M1317 408.5H1319 M1317 441.5H1319 M1317 474.5H1319 M1317 507.5H1319 M1317 540.5H1319 M1317 573.5H1319 M1317 606.5H1319 M1317 639.5H1319 M1317 672.5H1319" stroke="#000" stroke-width="1"/>
<rect x="1318" y="478" width="41" height="11" fill="#0000ff" />
<text x="1322.5" y="487" font-size="9.5" fill="#fff" text-anchor="start" textLength="32.5" lengthAdjust="spacingAndGlyphs" >1.53246</text>
<rect x="1318" y="558" width="41" height="11" fill="#000" />
<text x="1322.5" y="567" font-size="9.5" fill="#fff" text-anchor="start" textLength="32.5" lengthAdjust="spacingAndGlyphs" >1.52560</text>
<text x="1315" y="424" font-size="9.5" fill="#000" text-anchor="end" textLength="18.5" lengthAdjust="spacingAndGlyphs" >23.6</text>
<text x="12.5" y="688" font-size="9.5" fill="#000" text-anchor="start" textLength="52.5" lengthAdjust="spacingAndGlyphs" >26 Dec 2014</text>
<text x="76.5" y="688" font-size="9.5" fill="#000" text-anchor="start" textLength="55.1" lengthAdjust="spacingAndGlyphs" >29 Dec 03:00</text>
<text x="140.5" y="688" font-size="9.5" fill="#000" text-anchor="start" textLength="54.4" lengthAdjust="spacingAndGlyphs" >29 Dec 11:00</text>
<text x="204.5" y="688" font-size="9.5" fill="#000" text-anchor="start" textLength="55.1" lengthAdjust="spacingAndGlyphs" >29 Dec 19:00</text>
<text x="268.5" y="688" font-size="9.5" fill="#000" text-anchor="start" textLength="55.1" lengthAdjust="spacingAndGlyphs" >30 Dec 03:00</text>
<text x="332.5" y="688" font-size="9.5" fill="#000" text-anchor="start" textLength="54.4" lengthAdjust="spacingAndGlyphs" >30 Dec 11:00</text>
<text x="396.5" y="688" font-size="9.5" fill="#000" text-anchor="start" textLength="55.1" lengthAdjust="spacingAndGlyphs" >30 Dec 19:00</text>
<text x="460.5" y="688" font-size="9.5" fill="#000" text-anchor="start" textLength="55.1" lengthAdjust="spacingAndGlyphs" >31 Dec 03:00</text>
<text x="524.5" y="688" font-size="9.5" fill="#000" text-anchor="start" textLength="54.4" lengthAdjust="spacingAndGlyphs" >31 Dec 11:00</text>
<text x="588.5" y="688" font-size="9.5" fill="#000" text-anchor="start" textLength="48.4" lengthAdjust="spacingAndGlyphs" >1 Jan 23:00</text>
<text x="652.5" y="688" font-size="9.5" fill="#000" text-anchor="start" textLength="48.4" lengthAdjust="spacingAndGlyphs" >2 Jan 07:00</text>
<text x="716.5" y="688" font-size="9.5" fill="#000" text-anchor="start" textLength="48.4" lengthAdjust="spacingAndGlyphs" >2 Jan 15:00</text>
<text x="780.5" y="688" font-size="9.5" fill="#000" text-anchor="start" textLength="48.4" lengthAdjust="spacingAndGlyphs" >4 Jan 23:00</text>
<text x="844.5" y="688" font-size="9.5" fill="#000" text-anchor="start" textLength="48.4" lengthAdjust="spacingAndGlyphs" >5 Jan 07:00</text>
<text x="908.5" y="688" font-size="9.5" fill="#000" text-anchor="start" textLength="48.4" lengthAdjust="spacingAndGlyphs" >5 Jan 15:00</text>
<text x="972.5" y="688" font-size="9.5" fill="#000" text-anchor="start" textLength="48.4" lengthAdjust="spacingAndGlyphs" >5 Jan 23:00</text>
<text x="1036.5" y="688" font-size="9.5" fill="#000" text-anchor="start" textLength="48.4" lengthAdjust="spacingAndGlyphs" >6 Jan 07:00</text>
<path d="M13.5 676V679 M77.5 676V679 M141.5 676V679 M205.5 676V679 M269.5 676V679 M333.5 676V679 M397.5 676V679 M461.5 676V679 M525.5 676V679 M589.5 676V679 M653.5 676V679 M717.5 676V679 M781.5 676V679 M845.5 676V679 M909.5 676V679 M973.5 676V679 M1037.5 676V679" stroke="#000" stroke-width="1"/>
<rect x="13" y="112" width="224" height="11" fill="#fff" />
<polygon points="16,116 23,116 19.5,120" fill="#000"/>
<text x="28" y="121" font-size="10" fill="#000" text-anchor="start" textLength="206" lengthAdjust="spacingAndGlyphs" >GBPUSDh,H1&#160;&#160;1.52597 1.52601 1.52494 1.52560</text>
</g>
<rect x="0" y="736" width="1366" height="8" fill="#5cba8a" />
<rect x="0" y="728" width="1369" height="16" fill="rgb(62,133,91)" fill-opacity="0.6"/>
<rect x="0" y="728" width="1366" height="1" fill="#6b9580" />
<rect x="8" y="727" width="1353" height="1" fill="#f6f2f2" />
<rect x="0" y="736" width="1366" height="1" fill="#3e8a60" />
<rect x="0" y="743" width="1369" height="1" fill="#427f5f" />
<text x="10.5" y="731" font-size="11" fill="#000" text-anchor="start" textLength="135" lengthAdjust="spacingAndGlyphs" >Для справки, нажмите F1</text>
<text x="641" y="731" font-size="11" fill="#000" text-anchor="start" textLength="38" lengthAdjust="spacingAndGlyphs" >Default</text>
<text x="1262" y="731" font-size="11" fill="#000" text-anchor="start" textLength="49" lengthAdjust="spacingAndGlyphs" >1213/1 kb</text>
<path d="M1206 721V733M1209 721V733M1212 721V733M1215 721V733M1218 722V733M1221 724V733M1224 721V733M1227 722V733" stroke="#5a7a10" stroke-width="2"/>
<path d="M1206 728V733M1209 730V733M1212 727V733M1215 729V733M1218 726V733M1221 727V733M1224 725V733M1227 724V733" stroke="#8a3a18" stroke-width="2"/>
<path d="M1218 725V728M1221 727V730M1224 724V728M1227 723V727" stroke="#c01010" stroke-width="2"/>
<path d="M12 738l9-1.3V744h-9zM22 736.5l13-1.8V744H22z" fill="#fff"/>
<rect x="66" y="733" width="30" height="11" fill="#0d8a10" />
<path d="M74 744v-4h14v4" fill="#fff"/><circle cx="78" cy="739" r="3" fill="none" stroke="#fff" stroke-width="1.5"/>
<rect x="128" y="734" width="12" height="10" fill="#2a5aa8" />
<rect x="141" y="736" width="16" height="8" fill="#fff" />
<path d="M143 739h12M143 742h12" stroke="#2a5aa8"/>
<rect x="175.5" y="729.5" width="58" height="16" fill="#ffffff" fill-opacity="0.18" stroke="#ffffff" stroke-opacity="0.5"/>
<circle cx="205" cy="745" r="13" fill="#d93025"/><path d="M192 745a13 13 0 0 1 5-10l8 10z" fill="#f5c518"/><circle cx="205" cy="745" r="5" fill="#fff"/><circle cx="205" cy="745" r="3.6" fill="#3a7ae0"/>
<path d="M255 744v-9q0-3 3-3h18l5 12z" fill="#7ab0e8"/><circle cx="266" cy="744" r="5" fill="#fff"/>
<path d="M313 744v-9q0-3 3-3h16l8 12z" fill="#fff"/><path d="M322 744v-9h6v9" stroke="#e02020" stroke-width="2" fill="none"/>
<circle cx="391" cy="746" r="14" fill="#fff"/><path d="M380 737l10 7 12-10" stroke="#e02020" stroke-width="4" fill="none"/>
<rect x="424" y="729" width="59" height="15" fill="#ffffff" fill-opacity="0.14"/>
<rect x="424.5" y="729.5" width="58" height="16" fill="none" stroke="#ffffff" stroke-opacity="0.45"/>
<rect x="423" y="729" width="1" height="15" fill="#2f6e4a" />
<rect x="486" y="729" width="59" height="15" fill="#ffffff" fill-opacity="0.14"/>
<rect x="486.5" y="729.5" width="58" height="16" fill="none" stroke="#ffffff" stroke-opacity="0.45"/>
<rect x="485" y="729" width="1" height="15" fill="#2f6e4a" />
<rect x="546" y="729" width="59" height="15" fill="#ffffff" fill-opacity="0.14"/>
<rect x="546.5" y="729.5" width="58" height="16" fill="none" stroke="#ffffff" stroke-opacity="0.45"/>
<rect x="545" y="729" width="1" height="15" fill="#2f6e4a" />
<rect x="609" y="729" width="59" height="15" fill="#ffffff" fill-opacity="0.14"/>
<rect x="609.5" y="729.5" width="58" height="16" fill="none" stroke="#ffffff" stroke-opacity="0.45"/>
<rect x="608" y="729" width="1" height="15" fill="#2f6e4a" />
<rect x="671" y="729" width="59" height="15" fill="#ffffff" fill-opacity="0.14"/>
<rect x="671.5" y="729.5" width="58" height="16" fill="none" stroke="#ffffff" stroke-opacity="0.9"/>
<rect x="670" y="729" width="1" height="15" fill="#2f6e4a" />
<circle cx="452" cy="745" r="11" fill="#1aa0e8"/><path d="M447 744q5-6 10 0" stroke="#fff" stroke-width="2" fill="none"/>
<rect x="499" y="731" width="32" height="13" fill="#ffffff" />
<circle cx="515" cy="745" r="10" fill="#2a6ac8"/><path d="M508 745a8 8 0 0 1 14-6l-5 6z" fill="#f07020"/><path d="M514 745l4-8" stroke="#fff" stroke-width="2"/>
<circle cx="576" cy="744" r="9" fill="#e02020"/><circle cx="576" cy="744" r="4" fill="#4a9a6e"/><path d="M576 732v5M566 738l4 2M586 738l-4 2" stroke="#e02020" stroke-width="4"/>
<ellipse cx="639" cy="745" rx="14" ry="12" fill="#f29a30"/><path d="M630 740h18l-2 4h-14z" fill="#fff" fill-opacity="0.8"/>
<circle cx="700" cy="750" r="15" fill="#a82018"/><ellipse cx="704" cy="741" rx="7" ry="4" fill="#e07060" fill-opacity="0.6"/>
<path d="M1160 744l3-3 3 3" stroke="#fff" fill="none" stroke-width="1.2"/>
<path d="M1176.5 745V741.5H1189.5V745" stroke="#e8f0ea" fill="none" stroke-width="1.5"/>
<path d="M1200 745v-4M1203 745v-4M1206 745v-3h5v3" stroke="#e8f0ea" fill="none" stroke-width="1.5"/>
<path d="M1224.5 745V741.5H1237.5" stroke="#e8f0ea" fill="none" stroke-width="1.5"/>
<text x="1307" y="746" font-size="11" fill="#ffffff" text-anchor="start" textLength="27" lengthAdjust="spacingAndGlyphs" >10:35</text>
<rect x="1361" y="31" width="5" height="697" fill="#5cba8a" />
<path d="M1348 735L1360 723M1352 735L1360 727M1356 735L1360 731" stroke="#b0c8b8" stroke-width="1"/>
</svg></body></html>
